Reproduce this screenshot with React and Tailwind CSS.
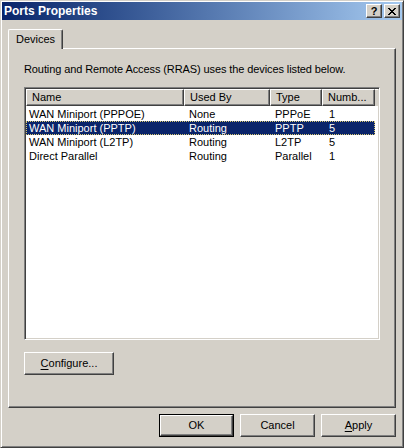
import React from "react";

const raised =
  "border border-t-white border-l-white border-r-[#404040] border-b-[#404040] shadow-[inset_-1px_-1px_0_#808080]";

const rows = [
  { name: "WAN Miniport (PPPOE)", usedBy: "None", type: "PPPoE", num: "1" },
  { name: "WAN Miniport (PPTP)", usedBy: "Routing", type: "PPTP", num: "5", selected: true },
  { name: "WAN Miniport (L2TP)", usedBy: "Routing", type: "L2TP", num: "5" },
  { name: "Direct Parallel", usedBy: "Routing", type: "Parallel", num: "1" },
];

function Button({ children, className = "", isDefault }) {
  const inner = (
    <div className={`${raised} flex h-full w-full items-center justify-center bg-[#d4d0c8]`}>
      {children}
    </div>
  );
  if (isDefault) {
    return <div className={`border border-black ${className}`}>{inner}</div>;
  }
  return <div className={className}>{inner}</div>;
}

function HeaderCell({ label, width }) {
  return (
    <div
      className={`${raised} flex h-full shrink-0 items-center px-[5px] bg-[#d4d0c8]`}
      style={{ width }}
    >
      {label}
    </div>
  );
}

export default function App() {
  return (
    <div className="w-[404px] h-[448px] bg-[#d4d0c8] font-['Liberation_Sans',Arial,sans-serif] text-[11px] text-black leading-none select-none">
      <div className="flex h-full w-full flex-col border border-t-[#d4d0c8] border-l-[#d4d0c8] border-r-[#404040] border-b-[#404040] p-px shadow-[inset_1px_1px_0_#fff,inset_-1px_-1px_0_#808080]">
        {/* title bar */}
        <div className="flex h-[18px] shrink-0 items-center bg-gradient-to-r from-[#0a246a] to-[#a6caf0] pl-[2px] pr-[2px]">
          <span className="font-bold text-white text-[12px]">Ports Properties</span>
          <div className="ml-auto flex gap-[2px]">
            <div className={`${raised} flex h-[14px] w-[16px] items-center justify-center bg-[#d4d0c8] font-bold text-[11px]`}>
              ?
            </div>
            <div className={`${raised} flex h-[14px] w-[16px] items-center justify-center bg-[#d4d0c8]`}>
              <svg width="8" height="7" viewBox="0 0 8 7" shapeRendering="crispEdges">
                <path d="M0 0h2v1h-2zM6 0h2v1h-2zM1 1h2v1h-2zM5 1h2v1h-2zM2 2h4v1h-4zM3 3h2v1h-2zM2 4h4v1h-4zM1 5h2v1h-2zM5 5h2v1h-2zM0 6h2v1h-2zM6 6h2v1h-2z" fill="#000" />
              </svg>
            </div>
          </div>
        </div>

        {/* body */}
        <div className="flex flex-1 flex-col px-[6px] pt-[9px]">
          {/* tab strip */}
          <div className="flex h-[19px] shrink-0">
            <div className="relative z-10 flex w-[55px] items-center justify-center rounded-tl-[2px] rounded-tr-[2px] border-l border-t border-r border-l-white border-t-white border-r-[#404040] bg-[#d4d0c8] shadow-[inset_-1px_0_0_#808080] -mb-px pb-[1px]">
              Devices
            </div>
          </div>

          {/* tab panel */}
          <div className="flex h-[360px] shrink-0 flex-col border border-t-white border-l-white border-r-[#404040] border-b-[#404040] shadow-[inset_-1px_-1px_0_#808080] px-[15px] pt-[15px]">
            <p className="h-[12px] tracking-[-0.1px]">Routing and Remote Access (RRAS) uses the devices listed below.</p>

            {/* list view */}
            <div className="mt-[11px] flex h-[253px] w-[356px] flex-col border border-t-[#808080] border-l-[#808080] border-r-white border-b-white shadow-[inset_1px_1px_0_#404040,inset_-1px_-1px_0_#d4d0c8] p-[1px] bg-white">
              <div className="flex h-[17px] shrink-0">
                <HeaderCell label="Name" width={158} />
                <HeaderCell label="Used By" width={86} />
                <HeaderCell label="Type" width={52} />
                <HeaderCell label="Numb..." width={53} />
                <div className="h-full flex-1 border-t border-t-white bg-[#d4d0c8]" />
              </div>
              <div className="flex flex-col pt-[1px]">
                {rows.map((r) => (
                  <div
                    key={r.name}
                    className={`flex h-[14px] w-[349px] items-center ${
                      r.selected
                        ? "bg-[#0a246a] text-white outline-1 outline-dotted outline-[#d8c870] -outline-offset-1"
                        : ""
                    }`}
                  >
                    <span className="w-[158px] shrink-0 pl-[3px]">{r.name}</span>
                    <span className="w-[86px] shrink-0 pl-[5px]">{r.usedBy}</span>
                    <span className="w-[52px] shrink-0 pl-[5px]">{r.type}</span>
                    <span className="w-[53px] shrink-0 pl-[7px]">{r.num}</span>
                  </div>
                ))}
              </div>
            </div>

            <Button className="mt-[12px] h-[23px] w-[90px]">
              <span>
                <span className="underline underline-offset-2">C</span>onfigure...
              </span>
            </Button>
          </div>

          {/* dialog buttons */}
          <div className="mt-[6px] flex justify-end gap-[6px]">
            <Button isDefault className="h-[23px] w-[75px]">
              OK
            </Button>
            <Button className="h-[23px] w-[75px]">Cancel</Button>
            <Button className="h-[23px] w-[75px]">
              <span>
                <span className="underline underline-offset-2">A</span>pply
              </span>
            </Button>
          </div>
        </div>
      </div>
    </div>
  );
}
